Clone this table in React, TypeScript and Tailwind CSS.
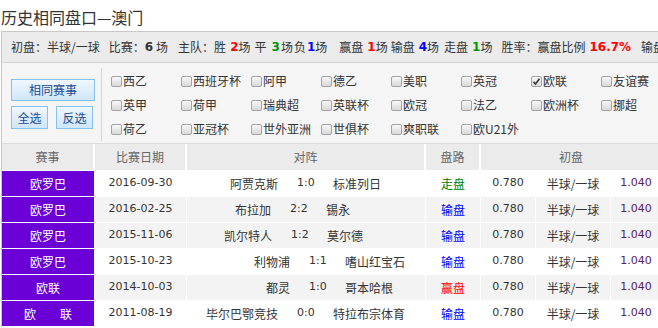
import React from "react"

const cjk = "font-['Noto_Sans_CJK_SC',sans-serif]"
const num = "font-['DejaVu_Sans','Noto_Sans_CJK_SC',sans-serif]"

const leagues = [
  ["西乙", "西班牙杯", "阿甲", "德乙", "美职", "英冠", "欧联", "友谊赛"],
  ["英甲", "荷甲", "瑞典超", "英联杯", "欧冠", "法乙", "欧洲杯", "挪超"],
  ["荷乙", "亚冠杯", "世外亚洲", "世俱杯", "爽职联", "欧U21外"],
]

type Match = {
  league: string
  date: string
  home: string
  score: string
  away: string
  result: string
  homeW: string
  gray: boolean
}

const matches: Match[] = [
  { league: "欧罗巴", date: "2016-09-30", home: "阿贾克斯", score: "1:0", away: "标准列日", result: "走盘", homeW: "w-[91px]", gray: false },
  { league: "欧罗巴", date: "2016-02-25", home: "布拉加", score: "2:2", away: "锡永", result: "输盘", homeW: "w-[84px]", gray: true },
  { league: "欧罗巴", date: "2015-11-06", home: "凯尔特人", score: "1:2", away: "莫尔德", result: "输盘", homeW: "w-[85px]", gray: true },
  { league: "欧罗巴", date: "2015-10-23", home: "利物浦", score: "1:1", away: "嗜山红宝石", result: "输盘", homeW: "w-[103px]", gray: false },
  { league: "欧联", date: "2014-10-03", home: "都灵", score: "1:0", away: "哥本哈根", result: "赢盘", homeW: "w-[103px]", gray: true },
  { league: "欧　　联", date: "2011-08-19", home: "毕尔巴鄂竞技", score: "0:0", away: "特拉布宗体育", result: "输盘", homeW: "w-[91px]", gray: false },
]

const resultColor: Record<string, string> = {
  走盘: "text-[#008000]",
  输盘: "text-[#0000ff]",
  赢盘: "text-[#ff0000]",
}

function Box({ checked }: { checked?: boolean }) {
  return (
    <span className="w-[11px] h-[11px] rounded-[2px] border border-[#a3a3a3] bg-gradient-to-b from-[#f7f7f7] to-[#d9d9d9] flex items-center justify-center shrink-0">
      {checked && (
        <svg width="9" height="9" viewBox="0 0 9 9">
          <path d="M1.5 4.8 L3.5 7 L7.5 1.8" stroke="#333" strokeWidth="1.6" fill="none" />
        </svg>
      )}
    </span>
  )
}

function Btn({ label, w, h }: { label: string; w: string; h: string }) {
  return (
    <div className={`${w} ${h} border border-[#86c1ee] bg-gradient-to-b from-[#f0f7fe] to-[#cfe6fb] text-[#1b4d93] text-[12px] flex items-center justify-center`}>
      {label}
    </div>
  )
}

export default function App() {
  return (
    <div className={`w-[658px] h-[328px] overflow-hidden bg-white pl-[1px] ${cjk} text-[12px] text-[#333]`}>
      <div className="h-[31px] pt-[5px] text-[16px] leading-[24px] text-[#333]">历史相同盘口—澳门</div>

      <div className="w-[661px] border-l border-t border-[#c8c8c8]">
        {/* 统计 */}
        <div className="h-[31px] bg-[#ebebeb] border-b border-[#d4d4d4] pl-[9px] flex items-center whitespace-nowrap leading-[16px]">
          <span>初盘：半球/一球</span>
          <span className="ml-[9px]">比赛：</span>
          <b className={`${num} text-[#333]`}>6</b>
          <span className="ml-[3px]">场</span>
          <span className="ml-[10px]">主队：胜</span>
          <b className={`${num} ml-[4px] text-[#ff0000]`}>2</b>
          <span>场</span>
          <span className="ml-[4px]">平</span>
          <b className={`${num} ml-[5px] text-[#009900]`}>3</b>
          <span className="ml-[1px]">场</span>
          <span className="ml-[1px]">负</span>
          <b className={`${num} ml-[1px] text-[#0000ff]`}>1</b>
          <span>场</span>
          <span className="ml-[12px]">赢盘</span>
          <b className={`${num} ml-[4px] text-[#ff0000]`}>1</b>
          <span>场</span>
          <span className="ml-[3px]">输盘</span>
          <b className={`${num} ml-[4px] text-[#0000ff]`}>4</b>
          <span>场</span>
          <span className="ml-[5px]">走盘</span>
          <b className={`${num} ml-[4px] text-[#009900]`}>1</b>
          <span>场</span>
          <span className="ml-[9px]">胜率：赢盘比例</span>
          <b className={`${num} ml-[4px] text-[#ff0000]`}>16.7%</b>
          <span className="ml-[10px]">输盘比例</span>
        </div>

        {/* 筛选 */}
        <div className="h-[81px] bg-[#f5f5f5] border-b border-[#dcdcdc] flex">
          <div className="w-[99px] shrink-0 pl-[9px] pt-[16px]">
            <Btn label="相同赛事" w="w-[84px]" h="h-[22px]" />
            <div className="flex gap-[8px] mt-[5px]">
              <Btn label="全选" w="w-[37px]" h="h-[23px]" />
              <Btn label="反选" w="w-[37px]" h="h-[23px]" />
            </div>
          </div>
          <div className="w-px shrink-0 h-[73px] mt-[5px] bg-[#c5d9ee]" />
          <div className="shrink-0 pl-[9px] pt-[6px]">
            {leagues.map((row, i) => (
              <div key={i} className="flex h-[24px] items-center">
                {row.map((name) => (
                  <label key={name} className="w-[70px] shrink-0 flex items-center gap-[1px] text-[12px] leading-[16px] text-[#333]">
                    <Box checked={name === "欧联"} />
                    <span>{name}</span>
                  </label>
                ))}
              </div>
            ))}
          </div>
        </div>

        {/* 表格 */}
        <div className="grid grid-cols-[93px_92px_239px_55px_55px_75px_50px] h-[27px] bg-[#ebebeb] text-[#666] border-b border-white">
          <div className="flex items-center justify-center border-r-2 border-white">赛事</div>
          <div className="flex items-center justify-center border-r-2 border-white">比赛日期</div>
          <div className="flex items-center justify-center border-r-2 border-white">对阵</div>
          <div className="flex items-center justify-center border-r-2 border-white">盘路</div>
          <div className="col-span-3 flex items-center justify-center">初盘</div>
        </div>

        {matches.map((m) => (
          <div
            key={m.date}
            className={`grid grid-cols-[93px_92px_239px_55px_55px_75px_50px] h-[26px] border-b border-white ${m.gray ? "bg-[#f3f3f3]" : "bg-white"}`}
          >
            <div className="bg-[#6a00d6] text-white flex items-center justify-center border-r border-white">{m.league}</div>
            <div className={`${num} text-[11px] flex items-center justify-center border-r border-white`}>{m.date}</div>
            <div className="flex items-center border-r border-white">
              <span className={`${m.homeW} text-right`}>{m.home}</span>
              <span className={`${num} text-[11px] ml-[19px] w-[36px]`}>{m.score}</span>
              <span>{m.away}</span>
            </div>
            <div className={`flex items-center justify-center border-r border-white ${resultColor[m.result]}`}>{m.result}</div>
            <div className={`${num} text-[11px] flex items-center justify-center border-r border-white`}>0.780</div>
            <div className="flex items-center justify-center border-r border-white">半球/一球</div>
            <div className={`${num} text-[11px] text-[#552266] flex items-center justify-center`}>1.040</div>
          </div>
        ))}
      </div>
    </div>
  )
}
